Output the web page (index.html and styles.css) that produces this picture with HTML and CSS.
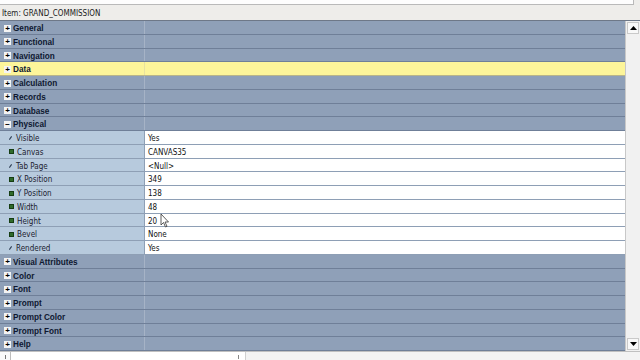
FILE: index.html
```html
<!DOCTYPE html>
<html>
<head>
<meta charset="utf-8">
<link rel="stylesheet" href="styles.css">
</head>
<body>
<div class="topbox"></div>
<div class="itemlabel">Item: GRAND_COMMISSION</div>
<div class="main">
  <div class="grid">
    <div class="row sec"><div class="name"><span class="pm">+</span>General</div><div class="val"></div></div>
    <div class="row sec"><div class="name"><span class="pm">+</span>Functional</div><div class="val"></div></div>
    <div class="row sec"><div class="name"><span class="pm">+</span>Navigation</div><div class="val"></div></div>
    <div class="row sec sel"><div class="name"><span class="pm">+</span>Data</div><div class="val"></div></div>
    <div class="row sec"><div class="name"><span class="pm">+</span>Calculation</div><div class="val"></div></div>
    <div class="row sec"><div class="name"><span class="pm">+</span>Records</div><div class="val"></div></div>
    <div class="row sec"><div class="name"><span class="pm">+</span>Database</div><div class="val"></div></div>
    <div class="row sec"><div class="name"><span class="pm">&minus;</span>Physical</div><div class="val"></div></div>
    <div class="row prop"><div class="name"><span class="ic tick"></span>Visible</div><div class="val">Yes</div></div>
    <div class="row prop"><div class="name"><span class="ic dot"></span>Canvas</div><div class="val">CANVAS35</div></div>
    <div class="row prop"><div class="name"><span class="ic tick"></span>Tab Page</div><div class="val">&lt;Null&gt;</div></div>
    <div class="row prop"><div class="name"><span class="ic dot"></span>X Position</div><div class="val">349</div></div>
    <div class="row prop"><div class="name"><span class="ic dot"></span>Y Position</div><div class="val">138</div></div>
    <div class="row prop"><div class="name"><span class="ic dot"></span>Width</div><div class="val">48</div></div>
    <div class="row prop"><div class="name"><span class="ic dot"></span>Height</div><div class="val">20</div></div>
    <div class="row prop"><div class="name"><span class="ic dot"></span>Bevel</div><div class="val">None</div></div>
    <div class="row prop"><div class="name"><span class="ic tick"></span>Rendered</div><div class="val">Yes</div></div>
    <div class="row sec"><div class="name"><span class="pm">+</span>Visual Attributes</div><div class="val"></div></div>
    <div class="row sec"><div class="name"><span class="pm">+</span>Color</div><div class="val"></div></div>
    <div class="row sec"><div class="name"><span class="pm">+</span>Font</div><div class="val"></div></div>
    <div class="row sec"><div class="name"><span class="pm">+</span>Prompt</div><div class="val"></div></div>
    <div class="row sec"><div class="name"><span class="pm">+</span>Prompt Color</div><div class="val"></div></div>
    <div class="row sec"><div class="name"><span class="pm">+</span>Prompt Font</div><div class="val"></div></div>
    <div class="row sec"><div class="name"><span class="pm">+</span>Help</div><div class="val"></div></div>
  </div>
  <div class="vscroll">
    <div class="sbtn"><svg width="7" height="4" viewBox="0 0 7 4"><path d="M0 4 L3.5 0 L7 4 Z" fill="#000"/></svg></div>
    <div class="strack"></div>
    <div class="sbtn"><svg width="7" height="4" viewBox="0 0 7 4"><path d="M0 0 L3.5 4 L7 0 Z" fill="#000"/></svg></div>
  </div>
</div>
<div class="hscroll">
  <div class="hbtn"><span class="grip"></span></div>
  <div class="htrack"><span class="hthumb"></span></div>
</div>
<svg class="cursor" width="10" height="15" viewBox="0 0 10 15"><path d="M1 1 L1 12 L3.5 9.5 L5.5 14 L7 13.3 L5 9 L8.5 9 Z" fill="#fff" stroke="#333" stroke-width="0.8"/></svg>
</body>
</html>
```
FILE: styles.css
```css
html, body {
  margin: 0;
  padding: 0;
}
body {
  width: 640px;
  height: 360px;
  overflow: hidden;
  background: #eeedea;
  font-family: "DejaVu Sans Condensed", "DejaVu Sans", sans-serif;
  position: relative;
}
.topbox {
  width: 633px;
  height: 4px;
  background: #fdfdfd;
  border-bottom: 1px solid #b9b9b9;
  border-right: 1px solid #b9b9b9;
}
.itemlabel {
  height: 15px;
  line-height: 17px;
  padding-left: 2px;
  font-size: 8px;
  color: #1a1a1a;
  border-bottom: 1px solid #6e7888;
}
.main {
  display: flex;
  height: 330px;
}
.grid {
  width: 626px;
  display: grid;
  grid-template-rows: repeat(24, 13.75px);
  background: #8fa0b8;
}
.row {
  display: grid;
  grid-template-columns: 145px 1fr;
  box-sizing: border-box;
  border-bottom: 1px solid #6f7f98;
  font-size: 8px;
  line-height: 12px;
  overflow: hidden;
}
.name {
  display: flex;
  align-items: center;
  padding-left: 4px;
  padding-top: 2px;
  white-space: nowrap;
}
.val {
  padding-left: 3px;
  padding-top: 2px;
  display: flex;
  align-items: center;
}
.sec {
  background: #8fa0b8;
  font-family: "Liberation Sans", Arial, sans-serif;
  font-weight: bold;
  font-size: 8.2px;
  color: #0e1830;
}
.sec .name {
  border-right: 1px solid #a6b3c6;
}
.sel {
  background: #fdf59a;
  border-bottom-color: #b9b58a;
}
.sel .name {
  border-right-color: #e8e2a0;
}
.prop {
  color: #1b2230;
  border-bottom-color: #8e9fb5;
}
.prop .name {
  background: #b7cadd;
  border-right: 1px solid #8e9fb5;
  padding-left: 9px;
}
.prop .val {
  background: #ffffff;
  color: #111;
}
.pm {
  display: inline-flex;
  align-items: center;
  justify-content: center;
  width: 7px;
  height: 7px;
  margin-right: 2px;
  margin-top: -2px;
  background: #f4f4f4;
  color: #000;
  font-size: 8px;
  line-height: 7px;
  font-weight: bold;
  font-family: "Liberation Sans", sans-serif;
}
.ic {
  display: inline-block;
  margin-right: 3px;
  margin-top: -2px;
}
.ic.dot {
  width: 3px;
  height: 3px;
  background: #2f6a2a;
  border: 0.5px solid #153d13;
}
.ic.tick {
  width: 4px;
  height: 4px;
  position: relative;
}
.ic.tick::after {
  content: "";
  position: absolute;
  left: 1px;
  top: 0;
  width: 1px;
  height: 4px;
  background: #2a3a50;
  transform: rotate(35deg);
}
.vscroll {
  width: 14px;
  display: flex;
  flex-direction: column;
  background: #f1f1f1;
  border-left: 1px solid #c8c8c8;
}
.sbtn {
  height: 10px;
  margin: 1px;
  background: #f8f8f8;
  border: 1px solid #c9c9c9;
  display: flex;
  align-items: center;
  justify-content: center;
}
.strack {
  flex: 1;
  background: #f1f1f1;
}
.hscroll {
  height: 9px;
  display: flex;
  background: #f3f3f3;
  border-top: 1px solid #c0c0c0;
}
.hbtn {
  width: 10px;
  border-right: 1px solid #bdbdbd;
  background: #fafafa;
  display: flex;
  align-items: center;
  justify-content: center;
}
.grip {
  width: 1px;
  height: 4px;
  background: #777;
}
.htrack {
  width: 234px;
  background: #ffffff;
  display: flex;
  justify-content: flex-end;
  align-items: center;
  border-right: 1px solid #d0d0d0;
}
.hthumb {
  width: 1px;
  height: 4px;
  background: #888;
  margin-right: 6px;
}
.cursor {
  position: absolute;
  left: 160px;
  top: 213px;
}
```
